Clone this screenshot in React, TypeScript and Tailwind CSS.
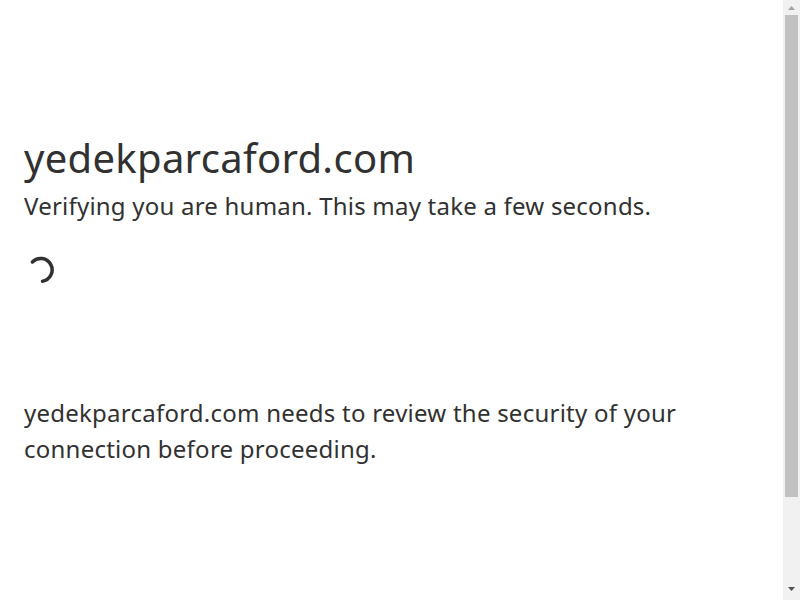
function Scrollbar() {
  return (
    <div className="w-[17px] shrink-0 flex flex-col bg-[#f1f1f1]">
      <div className="h-[15px] flex items-center justify-center">
        <svg width="7" height="4" viewBox="0 0 7 4">
          <path d="M3.5 0 L7 4 L0 4 Z" fill="#a3a3a3" />
        </svg>
      </div>
      <div className="flex-1 px-[2px]">
        <div className="h-[482px] bg-[#c1c1c1]" />
      </div>
      <div className="h-[20px] flex items-center justify-center pb-[2px]">
        <svg width="7" height="4" viewBox="0 0 7 4">
          <path d="M0 0 L7 0 L3.5 4 Z" fill="#505050" />
        </svg>
      </div>
    </div>
  );
}

export default function App() {
  return (
    <div className="h-screen flex bg-white text-[#313131] font-['Noto_Sans',sans-serif]">
      <main className="flex-1 overflow-hidden">
        <div className="pt-32 px-6 max-w-[60rem]">
          <h1 className="text-[40px] leading-[60px] font-normal tracking-[0.3px]">yedekparcaford.com</h1>
          <h2 className="text-2xl leading-9 font-normal tracking-[0.22px]">
            Verifying you are human. This may take a few seconds.
          </h2>

          {/* spinner */}
          <div className="h-[100px] pt-[30px]">
            <svg width="34" height="34" viewBox="0 0 34 34">
              <path
                d="M8.4 7.9 A11.5 11.5 0 1 1 18.5 27.3"
                fill="none"
                stroke="#313131"
                strokeWidth="3.5"
                strokeLinecap="round"
              />
            </svg>
          </div>

          <p className="mt-[71px] text-2xl leading-9 max-w-[700px] tracking-[0.24px]">
            yedekparcaford.com needs to review the security of your connection before proceeding.
          </p>
        </div>
      </main>
      <Scrollbar />
    </div>
  );
}
